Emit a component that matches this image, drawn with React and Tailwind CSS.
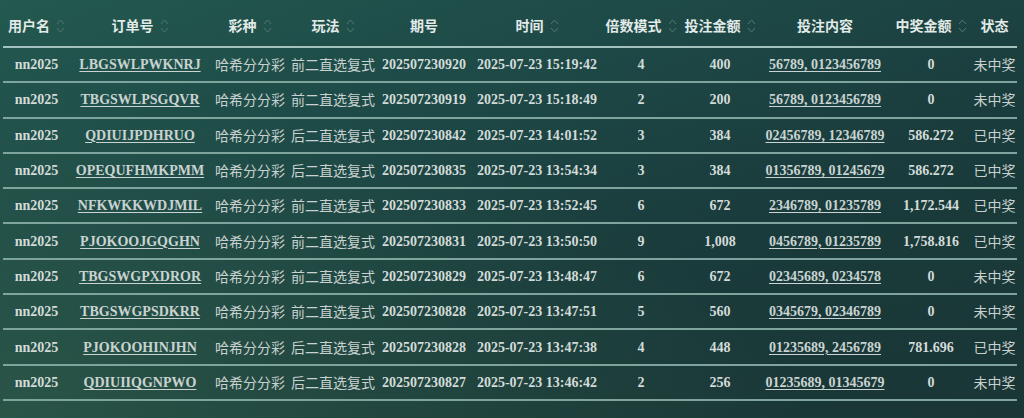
import React from 'react';

const rows = [
  ['LBGSWLPWKNRJ', '前二直选复式', '202507230920', '2025-07-23 15:19:42', '4', '400', '56789, 0123456789', '0', '未中奖'],
  ['TBGSWLPSGQVR', '前二直选复式', '202507230919', '2025-07-23 15:18:49', '2', '200', '56789, 0123456789', '0', '未中奖'],
  ['QDIUIJPDHRUO', '后二直选复式', '202507230842', '2025-07-23 14:01:52', '3', '384', '02456789, 12346789', '586.272', '已中奖'],
  ['OPEQUFHMKPMM', '后二直选复式', '202507230835', '2025-07-23 13:54:34', '3', '384', '01356789, 01245679', '586.272', '已中奖'],
  ['NFKWKKWDJMIL', '前二直选复式', '202507230833', '2025-07-23 13:52:45', '6', '672', '2346789, 01235789', '1,172.544', '已中奖'],
  ['PJOKOOJGQGHN', '前二直选复式', '202507230831', '2025-07-23 13:50:50', '9', '1,008', '0456789, 01235789', '1,758.816', '已中奖'],
  ['TBGSWGPXDROR', '前二直选复式', '202507230829', '2025-07-23 13:48:47', '6', '672', '02345689, 0234578', '0', '未中奖'],
  ['TBGSWGPSDKRR', '前二直选复式', '202507230828', '2025-07-23 13:47:51', '5', '560', '0345679, 02346789', '0', '未中奖'],
  ['PJOKOOHINJHN', '后二直选复式', '202507230828', '2025-07-23 13:47:38', '4', '448', '01235689, 2456789', '781.696', '已中奖'],
  ['QDIUIIQGNPWO', '后二直选复式', '202507230827', '2025-07-23 13:46:42', '2', '256', '01235689, 01345679', '0', '未中奖'],
];

const headers = [
  ['用户名', true],
  ['订单号', true],
  ['彩种', true],
  ['玩法', true],
  ['期号', false],
  ['时间', true],
  ['倍数模式', true],
  ['投注金额', true],
  ['投注内容', false],
  ['中奖金额', true],
  ['状态', false],
];

const cols = 'grid grid-cols-[67px_140px_80px_86px_96px_130px_78px_80px_130px_82px_45px]';
const serif = 'font-["Liberation_Serif","Noto_Sans_CJK_SC",serif] font-bold';
const sans = 'font-["Noto_Sans_CJK_SC","Noto_Sans",sans-serif]';

const SortIcon = () => (
  <svg width="9" height="16" viewBox="0 0 9 16" fill="none" stroke="#54766f" strokeWidth="1" className="ml-[6px]">
    <path d="M1 6 L4.5 2 L8 6" />
    <path d="M1 10 L4.5 14 L8 10" />
  </svg>
);

export default function App() {
  return (
    <div className="w-[1024px] h-[418px] overflow-hidden bg-[linear-gradient(160deg,#23594f_0%,#1d4846_35%,#1a3c3c_60%,#1a3535_100%)] relative">
      <div className="absolute inset-0 bg-[radial-gradient(ellipse_at_0%_100%,rgba(60,110,80,0.45),transparent_55%)]" />
      <div className="relative ml-[3px] w-[1014px]">
        <div className={`${cols} h-[48px] pt-[5px] border-b-2 border-[#a3c2bd] text-[14px] text-[#e2eae8] ${sans} font-bold`}>
          {headers.map(([label, sortable]) => (
            <div key={label} className="flex items-center justify-center">
              <span>{label}</span>
              {sortable && <SortIcon />}
            </div>
          ))}
        </div>
        {rows.map((r, i) => (
          <div key={i} className={`${cols} h-[35.3px] border-b-2 border-[#7fa39d] text-[14px] text-[#d3dbd9]`}>
            <div className={`flex items-center justify-center ${serif}`}>nn2025</div>
            <div className={`flex items-center justify-center ${serif} text-[#c9d3d1] underline underline-offset-2`}>{r[0]}</div>
            <div className={`flex items-center justify-center ${sans} text-[#c8d1cf]`}>哈希分分彩</div>
            <div className={`flex items-center justify-center ${sans} text-[#c8d1cf]`}>{r[1]}</div>
            <div className={`flex items-center justify-center ${serif}`}>{r[2]}</div>
            <div className={`flex items-center justify-center ${serif}`}>{r[3]}</div>
            <div className={`flex items-center justify-center ${serif}`}>{r[4]}</div>
            <div className={`flex items-center justify-center ${serif}`}>{r[5]}</div>
            <div className={`flex items-center justify-center ${serif} text-[#c9d3d1] underline underline-offset-2`}>{r[6]}</div>
            <div className={`flex items-center justify-center ${serif}`}>{r[7]}</div>
            <div className={`flex items-center justify-center ${sans} text-[#c8d1cf]`}>{r[8]}</div>
          </div>
        ))}
      </div>
    </div>
  );
}
